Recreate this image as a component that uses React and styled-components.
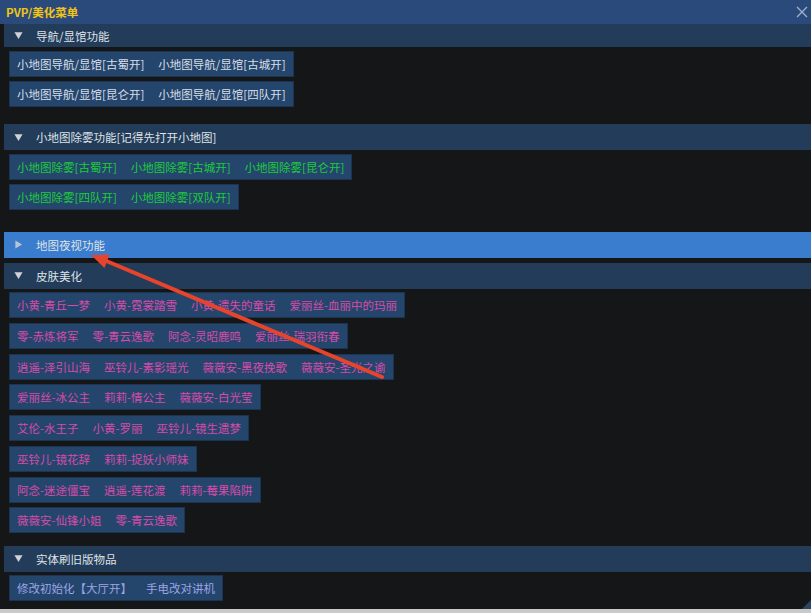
import React from "react";
import styled, { createGlobalStyle } from "styled-components";

const Global = createGlobalStyle`
  html, body {
    margin: 0;
    padding: 0;
    background: #c9c9c9;
  }
  body {
    font-family: "Noto Sans CJK SC", "Noto Sans", sans-serif;
    font-size: 11.5px;
  }
`;

const tones = {
  light: "#d9dee6",
  green: "#1ccb3a",
  pink: "#d84ba9",
  lavender: "#9ea4e6",
};

const Window = styled.div`
  position: relative;
  width: 811px;
  height: 609px;
  background: #151618;
  overflow: hidden;
  display: flex;
  flex-direction: column;
`;

const TitleBar = styled.div`
  height: 24px;
  flex: none;
  background: #294a7a;
  display: flex;
  align-items: center;
  justify-content: space-between;
  padding: 0 3px 0 6px;
  color: #f2c417;
  font-weight: 700;
  font-size: 11.5px;
  z-index: 1;
`;

const CloseBtn = styled.svg`
  width: 12px;
  height: 12px;
  stroke: #9fb0c8;
  stroke-width: 1.4;
`;

const Body = styled.div`
  flex: 1;
  display: flex;
  flex-direction: column;
  padding-left: 4px;
`;

const Section = styled.div`
  display: flex;
  flex-direction: column;
  margin-top: ${(p) => p.$top}px;
`;

const Header = styled.div`
  height: ${(p) => p.$h || 26}px;
  background: ${(p) => (p.$active ? "#3a7ccd" : "#223c5a")};
  display: flex;
  align-items: center;
  color: #dfe2e6;
  flex: none;
`;

const Caret = styled.span`
  width: 32px;
  flex: none;
  display: flex;
  justify-content: center;
  padding-right: 4px;
  box-sizing: border-box;
  svg {
    width: 9px;
    height: 9px;
    fill: ${(p) => (p.$open ? "#cfd3d8" : "#b9c4d2")};
  }
`;

const Rows = styled.div`
  display: flex;
  flex-direction: column;
  gap: 4.7px;
  padding: 3.5px 0 0 5px;
`;

const ButtonRow = styled.div`
  display: flex;
  align-self: flex-start;
  height: 26px;
  box-sizing: border-box;
  background: #24466d;
  border: 1px solid #1c3452;
`;

const Btn = styled.div`
  padding: 0 7px;
  display: flex;
  align-items: center;
  white-space: nowrap;
  color: ${(p) => tones[p.$tone]};
`;

const Grip = styled.div`
  position: absolute;
  right: 0;
  bottom: 0;
  width: 0;
  height: 0;
  border-left: 9px solid transparent;
  border-bottom: 9px solid #2a4466;
`;

const Overlay = styled.svg`
  position: absolute;
  left: 0;
  top: 0;
  width: 811px;
  height: 613px;
  pointer-events: none;
  z-index: 2;
`;

const sections = [
  {
    title: "导航/显馆功能",
    top: 0,
    h: 23,
    open: true,
    tone: "light",
    rows: [
      ["小地图导航/显馆[古蜀开]", "小地图导航/显馆[古城开]"],
      ["小地图导航/显馆[昆仑开]", "小地图导航/显馆[四队开]"],
    ],
  },
  {
    title: "小地图除雾功能[记得先打开小地图]",
    top: 17,
    open: true,
    tone: "green",
    rows: [
      ["小地图除雾[古蜀开]", "小地图除雾[古城开]", "小地图除雾[昆仑开]"],
      ["小地图除雾[四队开]", "小地图除雾[双队开]"],
    ],
  },
  { title: "地图夜视功能", top: 21.5, open: false, active: true },
  {
    title: "皮肤美化",
    top: 5,
    open: true,
    tone: "pink",
    rows: [
      ["小黄-青丘一梦", "小黄-霓裳踏雪", "小黄-遗失的童话", "爱丽丝-血丽中的玛丽"],
      ["零-赤炼将军", "零-青云逸歌", "阿念-灵昭鹿鸣", "爱丽丝-瑞羽衔春"],
      ["逍遥-泽引山海", "巫铃儿-素影瑶光", "薇薇安-黑夜挽歌", "薇薇安-圣光之谕"],
      ["爱丽丝-冰公主", "莉莉-情公主", "薇薇安-白光莹"],
      ["艾伦-水王子", "小黄-罗丽", "巫铃儿-镜生遗梦"],
      ["巫铃儿-镜花辞", "莉莉-捉妖小师妹"],
      ["阿念-迷途僵宝", "逍遥-莲花渡", "莉莉-莓果陷阱"],
      ["薇薇安-仙锋小姐", "零-青云逸歌"],
    ],
  },
  {
    title: "实体刷旧版物品",
    top: 12.8,
    open: true,
    tone: "lavender",
    rows: [["修改初始化【大厅开】", "手电改对讲机"]],
  },
];

const Arrow = ({ open }) => (
  <svg viewBox="0 0 10 10">
    {open ? <path d="M0.5 1.5 L9.5 1.5 L5 9 Z" /> : <path d="M1.5 0.5 L9 5 L1.5 9.5 Z" />}
  </svg>
);

export default function App() {
  return (
    <>
      <Global />
      <Window>
        <TitleBar>
          <span>PVP/美化菜单</span>
          <CloseBtn viewBox="0 0 12 12">
            <path d="M1 1 L11 11 M11 1 L1 11" />
          </CloseBtn>
        </TitleBar>
        <Body>
          {sections.map((s) => (
            <Section key={s.title} $top={s.top}>
              <Header $h={s.h} $active={s.active}>
                <Caret $open={s.open}>
                  <Arrow open={s.open} />
                </Caret>
                {s.title}
              </Header>
              {s.rows && (
                <Rows>
                  {s.rows.map((row, i) => (
                    <ButtonRow key={i}>
                      {row.map((label, j) => (
                        <Btn key={j} $tone={s.tone}>
                          {label}
                        </Btn>
                      ))}
                    </ButtonRow>
                  ))}
                </Rows>
              )}
            </Section>
          ))}
        </Body>
        <Grip />
      </Window>
      <Overlay viewBox="0 0 811 613">
        <line x1="382" y1="377" x2="104" y2="260" stroke="#e8442b" strokeWidth="4" strokeLinecap="round" />
        <polygon points="91,255 104.5,268 109.5,254.5" fill="#e8442b" />
      </Overlay>
    </>
  );
}
